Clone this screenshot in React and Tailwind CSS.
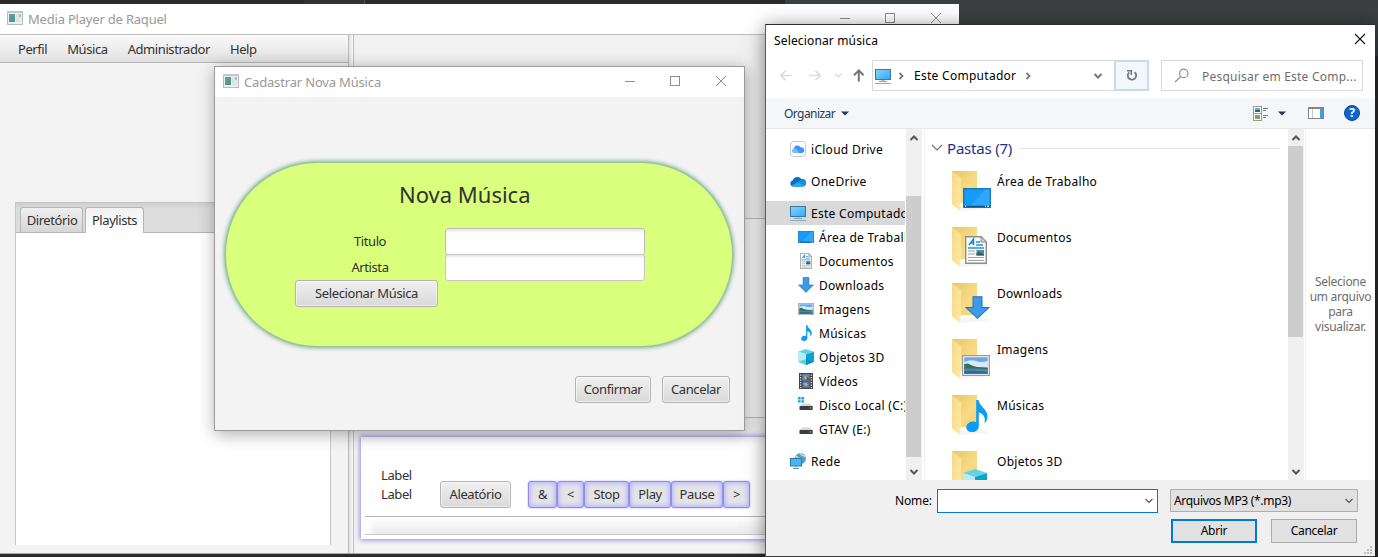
import React from 'react';

const fxButton =
  'flex items-center justify-center rounded-[3px] border border-[#b4b4b4] bg-linear-to-b from-[#f0f0f0] to-[#d9d9d9] text-[13px] tracking-[-0.4px] text-[#323232] shadow-[inset_0_0_0_1px_rgba(255,255,255,0.5)]';

function AppIcon() {
  return (
    <svg width="16" height="14" viewBox="0 0 16 14" className="-mt-[2px] shrink-0">
      <defs>
        <linearGradient id="app" x1="0" y1="0" x2="0.6" y2="1">
          <stop offset="0" stopColor="#6a96be" />
          <stop offset="1" stopColor="#4b9c78" />
        </linearGradient>
      </defs>
      <rect x="0.5" y="0.5" width="15" height="13" fill="#eceef0" stroke="#b8bbbe" />
      <rect x="0" y="0" width="16" height="2" fill="#c3c7ca" />
      <rect x="2" y="3" width="6" height="8" fill="url(#app)" />
      <rect x="9" y="3" width="3" height="8" fill="#dfe2e5" />
      <rect x="12" y="3" width="2" height="3" fill="#a3c3c4" />
      <rect x="12" y="6" width="2" height="5" fill="#e4e7ea" />
    </svg>
  );
}

function WindowControls() {
  return (
    <svg width="101" height="12" viewBox="0 0 101 12" fill="none" stroke="#8e8e8e" className="shrink-0">
      <path d="M0 6.5H10" />
      <rect x="45.5" y="1.5" width="9" height="9" />
      <path d="M91 1L101 11M101 1L91 11" />
    </svg>
  );
}

function Chevron({ dir = 'down', color = '#555', w = 1.8, className = '' }) {
  const d = {
    down: 'M1.5 3L5 6.5L8.5 3',
    up: 'M1.5 7L5 3.5L8.5 7',
    right: 'M3.5 2L6.5 5L3.5 8',
  }[dir];
  return (
    <svg width="10" height="10" viewBox="0 0 10 10" fill="none" stroke={color} strokeWidth={w} className={'shrink-0 ' + className}>
      <path d={d} />
    </svg>
  );
}

function MonitorIcon() {
  return (
    <svg width="16" height="16" viewBox="0 0 16 16">
      <defs>
        <linearGradient id="mon" x1="0" y1="0" x2="1" y2="1">
          <stop offset="0" stopColor="#8bd3fb" />
          <stop offset="0.5" stopColor="#5cc0f8" />
          <stop offset="1" stopColor="#2ba9f2" />
        </linearGradient>
      </defs>
      <rect x="0.5" y="1.5" width="15" height="10" fill="url(#mon)" stroke="#39789f" />
      <path d="M6 12H10V13H6Z" fill="#b7c6d0" />
      <path d="M4 13.5H12" stroke="#8ba5b5" />
      <path d="M0 15.5H16" stroke="#8fabc0" />
    </svg>
  );
}

function DesktopGlyph({ w = 16, h = 12 }) {
  return (
    <svg width={w} height={h} viewBox="0 0 28 20" preserveAspectRatio="none">
      <rect x="0.7" y="0.7" width="26.6" height="18.6" fill="#159bfc" stroke="#0b6fb5" strokeWidth="1.2" />
      <path d="M8 17L22 1.5H26.5V17Z" fill="#2fa6ff" />
      <path d="M1 18.5H27" stroke="#07578f" strokeWidth="1.2" />
      <path d="M2 18.3H3.2M22 18.3H23M24 18.3H26" stroke="#fff" strokeWidth="1" />
    </svg>
  );
}

function DocGlyph({ w = 12, h = 16 }) {
  return (
    <svg width={w} height={h} viewBox="0 0 22 28" preserveAspectRatio="none">
      <path d="M0.7 0.7H16L21.3 6V27.3H0.7Z" fill="#fafafa" stroke="#8b8f93" strokeWidth="1.4" />
      <path d="M16 0.7V6H21.3Z" fill="#d3d6d9" stroke="#8b8f93" />
      <path d="M4 9L8.5 3L8.5 9M5.5 7H9" stroke="#1c8ad6" strokeWidth="1.5" fill="none" />
      <path d="M11 6H15M11 9H18M3 12H19" stroke="#2a93dc" strokeWidth="1.3" />
      <path d="M3 15H10M3 18H10M3 21.5H19M3 24.5H19" stroke="#a2a6aa" strokeWidth="1.2" />
      <rect x="11.5" y="14" width="7.5" height="5.5" fill="#4d88b4" />
      <path d="M11.5 19.5V17L14 16L19 18.5V19.5Z" fill="#2f6349" />
    </svg>
  );
}

function ArrowGlyph({ w = 16, h = 16 }) {
  return (
    <svg width={w} height={h} viewBox="0 0 24 24" preserveAspectRatio="none">
      <path d="M7.7 0.7H16.3V12H23L12 23.2L1 12H7.7Z" fill="#3c9ae8" stroke="#2173bd" strokeWidth="1" />
    </svg>
  );
}

function PictureGlyph({ w = 16, h = 12 }) {
  return (
    <svg width={w} height={h} viewBox="0 0 28 21" preserveAspectRatio="none">
      <rect x="0.6" y="0.6" width="26.8" height="19.8" fill="#fff" stroke="#9b9b9b" strokeWidth="1.3" />
      <rect x="2.2" y="2.2" width="23.6" height="16.6" fill="#6aa9ee" />
      <path d="M2.2 7Q9 4 14 6T25.8 6V12H2.2Z" fill="#d8eaf9" />
      <path d="M2.2 9L6 8.5L10 10.5L15 12L25.8 13V15H2.2Z" fill="#35705a" />
      <path d="M2.2 13.5Q12 13 25.8 14.5V18.8H2.2Z" fill="#5188a8" />
      <path d="M2.2 16Q12 14.5 25.8 17V18.8H2.2Z" fill="#35699c" />
    </svg>
  );
}

function NoteGlyph({ w = 12, h = 16 }) {
  return (
    <svg width={w} height={h} viewBox="0 0 22 32" preserveAspectRatio="none">
      <path d="M10.2 0H12.5C13 6 21.5 9 21.5 16C21.5 19 20.5 21.5 18.5 23.5C20 17 17 13.5 12.8 12.5V26C12.8 30 9.5 32 6 32C2.5 32 0.3 30 0.3 27.5C0.3 24 3.5 21.5 7 21.5C8.3 21.5 9.3 21.8 10.2 22.3Z" fill="#0b9df5" />
    </svg>
  );
}

function CubeGlyph({ w = 16, h = 16 }) {
  return (
    <svg width={w} height={h} viewBox="0 0 24 24" preserveAspectRatio="none">
      <path d="M0 4L12 0L24 4L12 8Z" fill="#5fd4e8" />
      <path d="M0 4L12 8V24L0 19Z" fill="#b9ecf3" />
      <path d="M24 4L12 8V24L24 19Z" fill="#08a5cb" />
      <path d="M12 24V15L24 19Z" fill="#0590b8" />
      <path d="M0 19L12 15V24Z" fill="#5ccfe2" />
    </svg>
  );
}

function VideoGlyph() {
  return (
    <svg width="14" height="16" viewBox="0 0 14 16">
      <rect x="0.5" y="0.5" width="13" height="15" fill="#3a3a3a" stroke="#444" />
      <path d="M1.7 1.5V15M12.3 1.5V15" stroke="#e8e8e8" strokeWidth="1.4" strokeDasharray="1.3 1.2" />
      <rect x="3.3" y="1" width="7.4" height="6.7" fill="#5585cf" />
      <rect x="3.3" y="8.3" width="7.4" height="6.7" fill="#4174c9" />
      <path d="M6 2.5L9 4L7.5 6.5L5 5Z" fill="#d8b52f" />
      <path d="M4 10L7.5 9.5L9.5 12L6 13.5Z" fill="#cfa43a" />
      <path d="M7.5 3.2L10 5.5V7H8Z" fill="#8e3a2d" />
    </svg>
  );
}

function DriveGlyph({ windows }) {
  return (
    <svg width="16" height="16" viewBox="0 0 16 16">
      {windows && <path d="M0 0H2.6V2.4H0ZM3.4 0H6V2.4H3.4ZM0 3.2H2.6V5.6H0ZM3.4 3.2H6V5.6H3.4Z" fill="#12a5ea" />}
      <path d="M4 6.5H12L14.7 9.5H1.5Z" fill="#d5d7d9" />
      <rect x="1.5" y="9" width="13.2" height="4" rx="0.5" fill="#3b3e40" />
      <rect x="11.6" y="10.4" width="1.6" height="1.2" fill="#45e05a" />
    </svg>
  );
}

function NetworkGlyph() {
  return (
    <svg width="17" height="16" viewBox="0 0 17 16" className="shrink-0">
      <circle cx="10.5" cy="5.5" r="5.5" fill="#5a9dc5" />
      <path d="M6 3Q9 5 8 7T12 10M10 0.5Q13 3 15.5 3.5" stroke="#d7ebf4" strokeWidth="1.3" fill="none" />
      <rect x="0.5" y="5.5" width="11" height="7.5" fill="#4cb6f4" stroke="#2878ab" />
      <path d="M3 15.5H9M6 13V15" stroke="#6f99b1" />
    </svg>
  );
}

function ICloudGlyph() {
  return (
    <svg width="16" height="16" viewBox="0 0 16 16">
      <rect x="0.5" y="0.5" width="15" height="15" rx="3" fill="#fdfdfd" stroke="#c8c8cc" />
      <path d="M4.2 12A2.3 2.3 0 0 1 3.8 7.6A3.6 3.6 0 0 1 10.5 6.3A2.8 2.8 0 0 1 12 12Z" fill="#3c95f5" />
      <path d="M4.2 12A2.3 2.3 0 0 1 3.8 7.6C6 7 8 9 9 12Z" fill="#74c0fb" />
    </svg>
  );
}

function OneDriveGlyph() {
  return (
    <svg width="16" height="11" viewBox="0 0 16 11">
      <path d="M3 10.5A3 3 0 0 1 2.6 4.6A5 5 0 0 1 11.6 3.2A3.7 3.7 0 0 1 13 10.5Z" fill="#0f6cc2" />
      <path d="M2.5 10.3L8.5 5.5Q11 3 12.5 3.6A3.5 3.5 0 0 1 13.3 10.5H3Z" fill="#1490df" />
      <path d="M1.5 9.8L7.3 6.6L15 9.6Q14 10.5 13 10.5H3Z" fill="#2aaaf0" />
    </svg>
  );
}

const TREE = [
  ['Área de Trabalho', <DesktopGlyph key="i" />],
  ['Documentos', <DocGlyph key="i" />],
  ['Downloads', <ArrowGlyph key="i" />],
  ['Imagens', <PictureGlyph key="i" />],
  ['Músicas', <NoteGlyph key="i" w={11} />],
  ['Objetos 3D', <CubeGlyph key="i" />],
  ['Vídeos', <VideoGlyph key="i" />],
  ['Disco Local (C:)', <DriveGlyph key="i" windows />],
  ['GTAV (E:)', <DriveGlyph key="i" />],
];

function TreeRow({ icon, label, nested, active }) {
  return (
    <div className={'flex h-6 shrink-0 items-center gap-[5px] whitespace-nowrap ' + (nested ? 'pl-8 ' : 'pl-6 ') + (active ? 'bg-[#d9d9d9]' : '')}>
      <span className="flex w-4 justify-center">{icon}</span>
      <span className="pt-[2px]">{label}</span>
    </div>
  );
}

const FOLDERS = [
  ['Área de Trabalho', 'left-[11px] top-[17px]', <DesktopGlyph key="i" w={28} h={20} />],
  ['Documentos', 'left-[13px] top-[9px]', <DocGlyph key="i" w={22} h={28} />],
  ['Downloads', 'left-[13px] top-[13px]', <ArrowGlyph key="i" w={25} h={23} />],
  ['Imagens', 'left-[10px] top-[16px]', <PictureGlyph key="i" w={28} h={21} />],
  ['Músicas', 'left-[14px] top-[5px]', <NoteGlyph key="i" w={22} h={32} />],
  ['Objetos 3D', 'left-[11px] top-[18px]', <CubeGlyph key="i" w={24} h={24} />],
];

function Folder({ label, pos, children }) {
  return (
    <div className="flex h-14 shrink-0">
      <div className="relative h-10 w-[45px]">
        <svg width="40" height="42" viewBox="0 0 40 42">
          <defs>
            <linearGradient id="fback" x1="0" y1="0" x2="1" y2="1">
              <stop offset="0" stopColor="#e9c765" />
              <stop offset="0.6" stopColor="#f8db85" />
              <stop offset="1" stopColor="#f1cf75" />
            </linearGradient>
            <linearGradient id="ffront" x1="0" y1="0" x2="1" y2="1">
              <stop offset="0" stopColor="#f6d987" />
              <stop offset="1" stopColor="#ffe9a6" />
            </linearGradient>
          </defs>
          <path d="M8 36L30 34L38 37.5L9 40Z" fill="#f5f5f5" />
          <path d="M0 0H25V32H0Z" fill="url(#fback)" />
          <path d="M0 0L9 7V30L8 40L0 33.5Z" fill="url(#ffront)" />
        </svg>
        <span className={'absolute ' + pos}>{children}</span>
      </div>
      <span className="pt-[3px] leading-4">{label}</span>
    </div>
  );
}

function MainWindow() {
  return (
    <div className="absolute left-0 top-1 flex h-[550px] w-[959px] flex-col border-b border-[#aaa] bg-[#f3f3f3]">
      <div className="flex h-[31px] shrink-0 items-center border-b border-[#bdbdbd] bg-white pl-[7px] pr-[18px]">
        <AppIcon />
        <span className="ml-[5px] pt-px text-[13px] tracking-[-0.2px] text-[#999]">Media Player de Raquel</span>
        <span className="ml-auto pb-[3px]"><WindowControls /></span>
      </div>
      <div className="flex min-h-0 flex-1">
        <div className="flex w-[348px] shrink-0 flex-col">
          <div className="flex h-7 items-center gap-5 border-b border-[#b5b5b5] bg-linear-to-b from-[#fafafa] to-[#e0e0e0] pl-[18px] pt-[3px] text-[13px] tracking-[-0.42px] text-[#323232]">
            <span>Perfil</span>
            <span>Música</span>
            <span>Administrador</span>
            <span>Help</span>
          </div>
          <div className="ml-[15px] mt-[139px] flex h-[343px] w-[316px] flex-col border-x border-[#c8c8c8] bg-white">
            <div className="flex h-[31px] items-end gap-[2px] border-y border-b-[#b5b5b5] border-t-[#c4c4c4] bg-linear-to-b from-[#cfcfcf] to-[#dcdcdc] to-20% pl-1 text-[13px] tracking-[-0.42px] text-[#323232]">
              <div className="flex h-[25px] w-[63px] items-center justify-center rounded-t-[3px] border border-b-0 border-[#b5b5b5] bg-linear-to-b from-[#efefef] to-[#d6d6d6] pl-px pt-[2px]">Diretório</div>
              <div className="-mb-px flex h-[26px] w-[59px] items-center justify-center rounded-t-[3px] border border-b-0 border-[#b5b5b5] bg-linear-to-b from-[#f1f1f1] to-white">Playlists</div>
            </div>
          </div>
        </div>
        <div className="w-1.5 shrink-0 border-x border-[#bdbdbd] bg-linear-to-r from-[#dedede] to-[#fafafa]" />
        <div className="flex min-w-0 flex-1 flex-col">
          <div className="h-[184px] shrink-0 border-b border-[#bdbdbd] bg-[#f1f1f1]" />
          <div className="h-[199px] shrink-0 border-b border-[#bdbdbd] bg-[#f8f8f8]" />
          <Player />
        </div>
      </div>
    </div>
  );
}

const MEDIA = [
  ['&', 'w-[29px]'],
  ['<', 'w-[27px]'],
  ['Stop', 'w-[45px]'],
  ['Play', 'w-[42px]'],
  ['Pause', 'w-[52px]'],
  ['>', 'w-[27px]'],
];

function Player() {
  return (
    <div className="ml-[7px] mt-[19px] flex h-[102px] w-[590px] flex-col bg-white text-[13px] tracking-[-0.4px] text-[#323232] shadow-[0_0_5px_1px_#9486e2,inset_0_7px_8px_-6px_#e4e4e4]">
      <div className="flex h-[79px] items-end pb-2 pl-5">
        <div className="flex w-[59px] flex-col pb-1 leading-[19px]">
          <span>Label</span>
          <span>Label</span>
        </div>
        <div className={fxButton + ' h-[27px] w-[71px] pt-px'}>Aleatório</div>
        <div className="ml-[17px] flex">
          {MEDIA.map(([label, w]) => (
            <div key={label} className={'flex h-[27px] items-center justify-center rounded-[3px] border border-[#8f8ce4] bg-[#e4e4e8] pt-px shadow-[inset_0_0_5px_1px_#b3b0ff,0_0_2px_#a8a5f4] ' + w}>
              {label}
            </div>
          ))}
        </div>
      </div>
      <div className="ml-1 h-[19px] border-y border-b-[#c9c9c9] border-t-[#b5b5b5] bg-linear-to-b from-white to-[#e9e9e9] shadow-[inset_9px_0_6px_-3px_#fff]" />
    </div>
  );
}

function RegisterWindow() {
  return (
    <div className="absolute left-[214px] top-[66px] flex h-[365px] w-[531px] flex-col border border-[#9c9c9c] bg-[#f3f3f3] shadow-[1px_3px_16px_rgba(0,0,0,0.33)]">
      <div className="flex h-[30px] shrink-0 items-center bg-white pl-2 pr-[18px]">
        <AppIcon />
        <span className="ml-[5px] pt-px text-[13px] tracking-[-0.17px] text-[#999]">Cadastrar Nova Música</span>
        <span className="ml-auto pb-[2px]"><WindowControls /></span>
      </div>
      <div className="ml-[11px] mt-[66px] flex h-[183px] w-[506px] shrink-0 flex-col items-start rounded-[92px] bg-[#d9ff7c] text-[13px] tracking-[-0.4px] text-[#323232] shadow-[0_0_0_1px_#9dc797,0_0_5px_1px_#3f8f62]">
        <div className="ml-[173px] mt-[14px] text-[22px] leading-[34px] tracking-[0px]">Nova Música</div>
        <div className="ml-[69px] mt-[17px] flex h-[26px]">
          <span className="flex w-[150px] items-center justify-center pt-[2px]">Titulo</span>
          <span className="h-[27px] w-[200px] rounded-[3px] border border-[#bcbcbc] bg-white shadow-[inset_0_3px_3px_-1px_#e6e6e6]" />
        </div>
        <div className="ml-[69px] flex h-[26px]">
          <span className="flex w-[150px] items-center justify-center pt-[2px]">Artista</span>
          <span className="h-[27px] w-[200px] rounded-[3px] border border-[#c6c6c6] bg-white shadow-[inset_0_3px_3px_-1px_#e6e6e6]" />
        </div>
        <div className={fxButton + ' ml-[69px] h-[27px] w-[143px]'}>Selecionar Música</div>
      </div>
      <div className="mt-[30px] flex justify-end gap-[11px] pr-[14px]">
        <div className={fxButton + ' h-[27px] w-[76px]'}>Confirmar</div>
        <div className={fxButton + ' h-[27px] w-[68px]'}>Cancelar</div>
      </div>
    </div>
  );
}

function Scrollbar({ thumb }) {
  return (
    <div className="flex h-full w-4 shrink-0 flex-col items-center bg-[#f0f0f0] pb-[3px] pt-1">
      <Chevron dir="up" w={2} />
      <div className={'w-[15px] self-start bg-[#cdcdcd] ' + thumb} />
      <Chevron dir="down" w={2} className="mt-auto" />
    </div>
  );
}

function FileDialog() {
  return (
    <div className="absolute left-[765px] top-6 flex h-[533px] w-[610px] flex-col border-b border-l border-t border-b-[#3a3a3a] border-l-[#5c5c5c] border-t-[#2d2d2d] bg-white text-[12px] tracking-[0.28px] text-black shadow-[0_3px_18px_rgba(0,0,0,0.5)]">
      <div className="flex h-[30px] shrink-0 items-center justify-between pl-2 pr-[9px]">
        <span className="pt-[2px] tracking-[0.15px]">Selecionar música</span>
        <svg width="12" height="12" viewBox="0 0 12 12" stroke="#111" strokeWidth="1.1" className="-mt-[2px]"><path d="M1 1L11 11M11 1L1 11" /></svg>
      </div>
      <div className="flex h-[43px] shrink-0 items-start pl-[13px] pt-[5px]">
        <svg width="74" height="31" viewBox="0 0 74 31" fill="none" strokeWidth="1.7" className="shrink-0">
          <path d="M13 15.5H2M6.5 10.8L1.8 15.5L6.5 20.2" stroke="#dcdcdc" />
          <path d="M30 15.5H41M36.5 10.8L41.2 15.5L36.5 20.2" stroke="#dcdcdc" />
          <path d="M56.5 13.7L59.5 16.7L62.5 13.7" stroke="#dadada" strokeWidth="1.4" />
        </svg>
        <svg width="12" height="31" viewBox="0 0 12 31" fill="none" stroke="#737373" strokeWidth="2" className="mr-[7px] shrink-0">
          <path d="M5.8 21.5V10.5M1 15.2L5.8 10.4L10.6 15.2" />
        </svg>
        <div className="flex h-[31px] w-[277px] items-center border border-[#d9d9d9] pl-[2px]">
          <MonitorIcon />
          <Chevron dir="right" color="#777" className="ml-[5px]" />
          <span className="ml-2 pt-px">Este Computador</span>
          <Chevron dir="right" color="#777" className="ml-[7px]" />
          <Chevron color="#777" w={2} className="ml-auto mr-[11px]" />
          <span className="-mr-px flex h-[31px] w-[35px] items-center justify-center border-2 border-[#c6dde8] bg-[#f0f8fc]">
            <svg width="12" height="13" viewBox="0 0 12 13" fill="none" stroke="#777" strokeWidth="1.8">
              <path d="M8.6 3.2A4.2 4.2 0 1 1 3.2 3.4" />
              <path d="M1 1.8H5.3V6" strokeWidth="1.6" />
            </svg>
          </span>
        </div>
        <div className="ml-3 flex h-[31px] w-[202px] items-center border border-[#d9d9d9] pl-3 text-[#6d6d6d]">
          <svg width="16" height="16" viewBox="0 0 16 16" fill="none" stroke="#909090" strokeWidth="1.2"><circle cx="9.8" cy="5.4" r="4.2" /><path d="M6.7 8.5L1 14" /></svg>
          <span className="ml-3 whitespace-nowrap pt-[2px] tracking-[0.22px]">Pesquisar em Este Comp...</span>
        </div>
      </div>
      <div className="flex h-[31px] shrink-0 items-center border-b border-[#e4e7ea] bg-[#f5f6f8] pl-[18px] pr-[15px] text-[#1e395b]">
        <span className="pt-px tracking-[-0.55px]">Organizar</span>
        <svg width="8" height="5" viewBox="0 0 8 5" className="ml-[6px]"><path d="M0 0.5H8L4 4.5Z" fill="#1e395b" /></svg>
        <svg width="15" height="15" viewBox="0 0 15 15" className="ml-auto">
          <rect x="0.5" y="0.5" width="8" height="14" fill="#fff" stroke="#9a9a9a" />
          <path d="M0 7.5H9" stroke="#9a9a9a" />
          <rect x="2" y="2" width="5" height="4" fill="#6aa5d8" />
          <rect x="2" y="4" width="5" height="2" fill="#2f6588" />
          <rect x="2" y="9" width="5" height="4" fill="#74a862" />
          <rect x="2" y="9" width="2" height="2" fill="#d27c42" />
          <path d="M10 2.5H15M10 4.5H13M10 9.5H15M10 11.5H13" stroke="#7c7c7c" />
        </svg>
        <svg width="8" height="5" viewBox="0 0 8 5" className="ml-[10px]"><path d="M0 0.5H8L4 4.5Z" fill="#1e395b" /></svg>
        <svg width="16" height="12" viewBox="0 0 16 12" className="ml-[22px]">
          <rect x="0.5" y="0.5" width="15" height="11" fill="#fff" stroke="#858585" />
          <path d="M0 1H16" stroke="#858585" strokeWidth="2" />
          <path d="M4.5 2V11" stroke="#c4c4c4" />
          <rect x="12" y="2" width="3" height="9" fill="#3f9de0" />
        </svg>
        <span className="ml-5 flex h-4 w-4 items-center justify-center rounded-full border border-[#0a4b99] bg-[#0a66cb] text-[12px] font-bold leading-none tracking-normal text-white">?</span>
      </div>
      <div className="flex h-[351px] shrink-0 overflow-hidden">
        <div className="flex w-[139px] shrink-0 flex-col overflow-hidden pt-2">
          <TreeRow label="iCloud Drive" icon={<ICloudGlyph />} />
          <div className="h-2 shrink-0" />
          <TreeRow label="OneDrive" icon={<OneDriveGlyph />} />
          <div className="h-2 shrink-0" />
          <TreeRow label="Este Computador" icon={<MonitorIcon />} active />
          {TREE.map(([label, icon]) => (
            <TreeRow key={label} label={label} icon={icon} nested />
          ))}
          <div className="h-2 shrink-0" />
          <TreeRow label="Rede" icon={<NetworkGlyph />} />
        </div>
        <div className="ml-px flex"><Scrollbar thumb="mt-[53px] h-[261px]" /></div>
        <div className="ml-[2px] flex w-[364px] shrink-0 flex-col overflow-hidden border-l border-[#f0f0f0] pt-[7px]">
          <div className="flex h-6 shrink-0 items-center pl-[6px]">
            <svg width="12" height="8" viewBox="0 0 12 8" fill="none" stroke="#707070" strokeWidth="1.2"><path d="M1 1L6 6L11 1" /></svg>
            <span className="ml-1 text-[15px] tracking-[-0.2px] text-[#1e3287]">Pastas (7)</span>
            <span className="ml-2 mr-[8px] h-px flex-1 bg-[#e2e2e2]" />
          </div>
          <div className="mt-[11px] flex flex-col pl-[27px]">
            {FOLDERS.map(([label, pos, icon]) => (
              <Folder key={label} label={label} pos={pos}>{icon}</Folder>
            ))}
          </div>
        </div>
        <Scrollbar thumb="mt-[3px] h-[191px]" />
        <div className="ml-px flex w-[70px] items-center justify-center border-l border-[#f0f0f0] pb-[2px] text-center leading-[15px] tracking-[-0.28px] text-[#6d6d6d]">
          <span>Selecione<br />um arquivo<br />para<br />visualizar.</span>
        </div>
      </div>
      <div className="flex flex-1 flex-col bg-[#f0f0f0] pr-[3px] pt-[9px] text-[12px] tracking-[-0.3px]">
        <div className="flex items-start">
          <span className="w-[171px] pr-[5px] pt-[3px] text-right tracking-[-0.1px]">Nome:</span>
          <span className="flex h-6 w-[221px] items-center justify-end border border-[#0078d7] bg-white pr-[3px]"><Chevron w={1.2} /></span>
          <span className="ml-3 flex h-[23px] w-[188px] items-center justify-between border border-[#adadad] bg-[#e1e1e1] pl-[3px] pr-[3px]"><span className="pt-px">Arquivos MP3 (*.mp3)</span><Chevron w={1.2} /></span>
        </div>
        <div className="mt-1.5 flex justify-end gap-[14px] pr-[15px]">
          <span className="flex h-6 w-[86px] items-center justify-center border-2 border-[#0078d7] bg-[#e1e1e1]">Abrir</span>
          <span className="flex h-6 w-[86px] items-center justify-center border border-[#adadad] bg-[#e1e1e1]">Cancelar</span>
        </div>
        <svg width="8" height="8" viewBox="0 0 8 8" fill="#bfbfbf" className="mt-[3px] self-end">
          <path d="M6 0H8V2H6ZM3 3H5V5H3ZM6 3H8V5H6ZM0 6H2V8H0ZM3 6H5V8H3ZM6 6H8V8H6Z" />
        </svg>
      </div>
    </div>
  );
}

export default function App() {
  return (
    <div className="relative h-[557px] w-[1378px] overflow-hidden bg-[#2b2b2b] font-['Noto_Sans',sans-serif]">
      <div className="flex h-14">
        <div className="w-[304px] bg-[#2b2b2b]" />
        <div className="w-[60px] bg-[#323436]" />
        <div className="w-[421px] border-l border-[#555] bg-[#2b2b2b]" />
        <div className="flex-1 bg-[#3c3f41]" />
      </div>
      <MainWindow />
      <RegisterWindow />
      <FileDialog />
    </div>
  );
}
